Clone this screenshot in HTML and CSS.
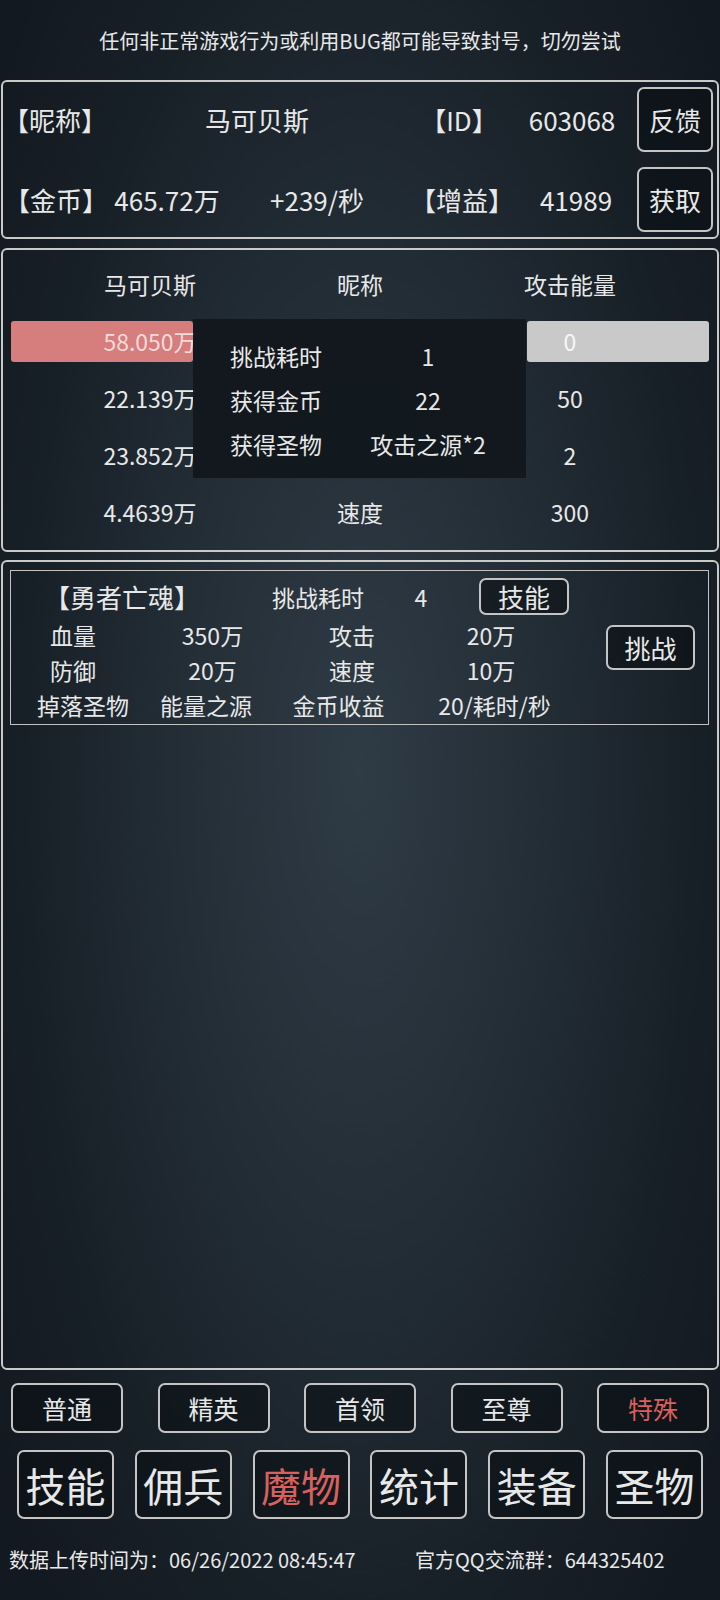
FILE: index.html
```html
<!DOCTYPE html>
<html>

<head>
    <meta charset="UTF-8">
    <meta name="viewport" content="width=device-width, initial-scale=1.0">
    <title>魔物</title>
    <link rel="stylesheet" href="styles.css">
</head>

<body>
    <div class="screen">
        <p class="notice">任何非正常游戏行为或利用BUG都可能导致封号，切勿尝试</p>

        <!-- Player info -->
        <section class="panel profile">
            <div class="profile-row row-name">
                <span>【昵称】</span>
                <span>马可贝斯</span>
                <span>【ID】</span>
                <span>603068</span>
                <button class="btn btn-side">反馈</button>
            </div>
            <div class="profile-row row-gold">
                <span>【金币】</span>
                <span>465.72万</span>
                <span>+239/秒</span>
                <span>【增益】</span>
                <span>41989</span>
                <button class="btn btn-side">获取</button>
            </div>
        </section>

        <!-- Battle result -->
        <section class="panel battle">
            <div class="battle-row">
                <span>马可贝斯</span>
                <span>昵称</span>
                <span>攻击能量</span>
            </div>
            <div class="battle-row with-bars">
                <span class="bar bar-hp"></span>
                <span class="bar bar-energy"></span>
                <span class="hp-text">58.050万</span>
                <span></span>
                <span class="energy-text">0</span>
            </div>
            <div class="battle-row">
                <span>22.139万</span>
                <span></span>
                <span>50</span>
            </div>
            <div class="battle-row">
                <span>23.852万</span>
                <span></span>
                <span>2</span>
            </div>
            <div class="battle-row">
                <span>4.4639万</span>
                <span>速度</span>
                <span>300</span>
            </div>

            <div class="result">
                <div class="result-row"><span>挑战耗时</span><span class="result-val">1</span></div>
                <div class="result-row"><span>获得金币</span><span class="result-val">22</span></div>
                <div class="result-row"><span>获得圣物</span><span class="result-val">攻击之源*2</span></div>
            </div>
        </section>

        <!-- Monster list -->
        <section class="panel arena">
            <div class="monster">
                <div class="monster-head">
                    <span class="monster-name">【勇者亡魂】</span>
                    <span>挑战耗时</span>
                    <span>4</span>
                    <button class="btn btn-skill">技能</button>
                </div>
                <div class="monster-body">
                    <div class="stats">
                        <div class="stat-row">
                            <span>血量</span><span>350万</span><span>攻击</span><span>20万</span>
                        </div>
                        <div class="stat-row">
                            <span>防御</span><span>20万</span><span>速度</span><span>10万</span>
                        </div>
                        <div class="stat-row drop-row">
                            <span>掉落圣物</span><span>能量之源</span><span>金币收益</span><span>20/耗时/秒</span>
                        </div>
                    </div>
                    <div class="actions">
                        <button class="btn btn-fight">挑战</button>
                    </div>
                </div>
            </div>
        </section>

        <div class="tabs">
            <button class="btn tab">普通</button>
            <button class="btn tab">精英</button>
            <button class="btn tab">首领</button>
            <button class="btn tab">至尊</button>
            <button class="btn tab active">特殊</button>
        </div>

        <nav class="nav">
            <button class="btn nav-btn">技能</button>
            <button class="btn nav-btn">佣兵</button>
            <button class="btn nav-btn active">魔物</button>
            <button class="btn nav-btn">统计</button>
            <button class="btn nav-btn">装备</button>
            <button class="btn nav-btn">圣物</button>
        </nav>

        <footer class="footer">
            <span>数据上传时间为：06/26/2022 08:45:47</span>
            <span>官方QQ交流群：644325402</span>
        </footer>
    </div>
</body>

</html>
```

FILE: styles.css
```css
/* Reset styles */
* {
    margin: 0;
    padding: 0;
    box-sizing: border-box;
}

body {
    font-family: "Noto Sans CJK SC", "Noto Sans", sans-serif;
    color: #e8e8e8;
    background-color: #182028;
    background-image: radial-gradient(ellipse 62% 72% at 50% 48%, #2f3b45 0%, #222c35 45%, #182027 75%, #131920 100%);
    min-height: 1600px;
}

.screen {
    width: 720px;
    height: 1600px;
    display: flex;
    flex-direction: column;
}

.notice {
    height: 80px;
    display: flex;
    align-items: center;
    justify-content: center;
    font-size: 20px;
}

.panel {
    margin: 0 1px;
    border: 2px solid #c9c9c9;
    border-radius: 6px;
    position: relative;
}

/* Buttons */
.btn {
    font-family: inherit;
    color: #e8e8e8;
    background-color: rgba(10, 14, 18, 0.55);
    border: 2px solid #c4c4c4;
    border-radius: 7px;
    line-height: 1;
    cursor: pointer;
}

.btn.active {
    color: #d9605c;
}

/* Player info */
.profile {
    height: 159px;
    padding: 5px 4px 5px 0;
    display: flex;
    flex-direction: column;
    gap: 15px;
}

.profile-row {
    height: 65px;
    display: grid;
    align-items: center;
    justify-items: center;
    font-size: 26px;
}

.row-name {
    grid-template-columns: 100px 308px 96px 130px 76px;
}

.row-gold {
    grid-template-columns: 106px 116px 184px 106px 122px 76px;
}

.btn-side {
    width: 76px;
    height: 65px;
    font-size: 26px;
}

/* Battle result */
.battle {
    margin-top: 9px;
    height: 304px;
    padding: 5px 0 10px;
}

.battle-row {
    height: 57px;
    padding: 0 42px;
    display: grid;
    grid-template-columns: repeat(3, 1fr);
    align-items: center;
    justify-items: center;
    font-size: 23px;
    position: relative;
}

.with-bars span {
    position: relative;
}

.with-bars .bar {
    position: absolute;
    top: 9px;
    height: 41px;
    width: 182px;
    border-radius: 3px;
}

.bar-hp {
    left: 8px;
    background-color: #d67d7d;
}

.bar-energy {
    left: 524px;
    background-color: #c9c9c9;
}

.hp-text {
    color: #f5dada;
}

.energy-text {
    color: #f7f7f7;
}

.result {
    position: absolute;
    left: 190px;
    top: 69px;
    width: 333px;
    height: 159px;
    padding: 15px 0 0 37px;
    background-color: rgba(17, 23, 29, 0.94);
    font-size: 23px;
}

.result-row {
    height: 44px;
    display: grid;
    grid-template-columns: 113px 170px;
    align-items: center;
}

.result-val {
    text-align: center;
}

/* Monster list */
.arena {
    margin-top: 8px;
    height: 810px;
    padding: 8px 8px 0 7px;
}

.monster {
    border: 1px solid #c2c2c2;
    padding: 7px 0 2px;
}

.monster-head {
    height: 37px;
    display: grid;
    grid-template-columns: 222px 170px 36px auto;
    align-items: center;
    justify-items: center;
    font-size: 23px;
}

.monster-name {
    font-size: 26px;
}

.btn-skill {
    justify-self: start;
    margin-left: 40px;
    width: 90px;
    height: 37px;
    font-size: 26px;
}

.monster-body {
    margin-top: 2px;
    display: flex;
}

.stats {
    width: 558px;
}

.stat-row {
    height: 35px;
    display: grid;
    grid-template-columns: 124px 155px 124px 154px;
    align-items: center;
    justify-items: center;
    font-size: 23px;
}

.drop-row {
    grid-template-columns: 144px 102px 163px 149px;
}

.actions {
    flex: 1;
    display: flex;
    justify-content: flex-end;
    align-items: flex-start;
    padding: 8px 13px 0 0;
}

.btn-fight {
    width: 89px;
    height: 45px;
    font-size: 26px;
}

/* Difficulty tabs */
.tabs {
    margin-top: 13px;
    padding: 0 11px;
    display: flex;
    justify-content: space-between;
}

.tab {
    width: 112px;
    height: 50px;
    font-size: 25px;
}

/* Main navigation */
.nav {
    margin-top: 17px;
    padding: 0 17px;
    display: flex;
    justify-content: space-between;
}

.nav-btn {
    width: 97px;
    height: 69px;
    font-size: 40px;
}

.footer {
    margin-top: 20px;
    height: 40px;
    padding-left: 9px;
    display: grid;
    grid-template-columns: 406px auto;
    align-items: center;
    font-size: 20px;
}
```
